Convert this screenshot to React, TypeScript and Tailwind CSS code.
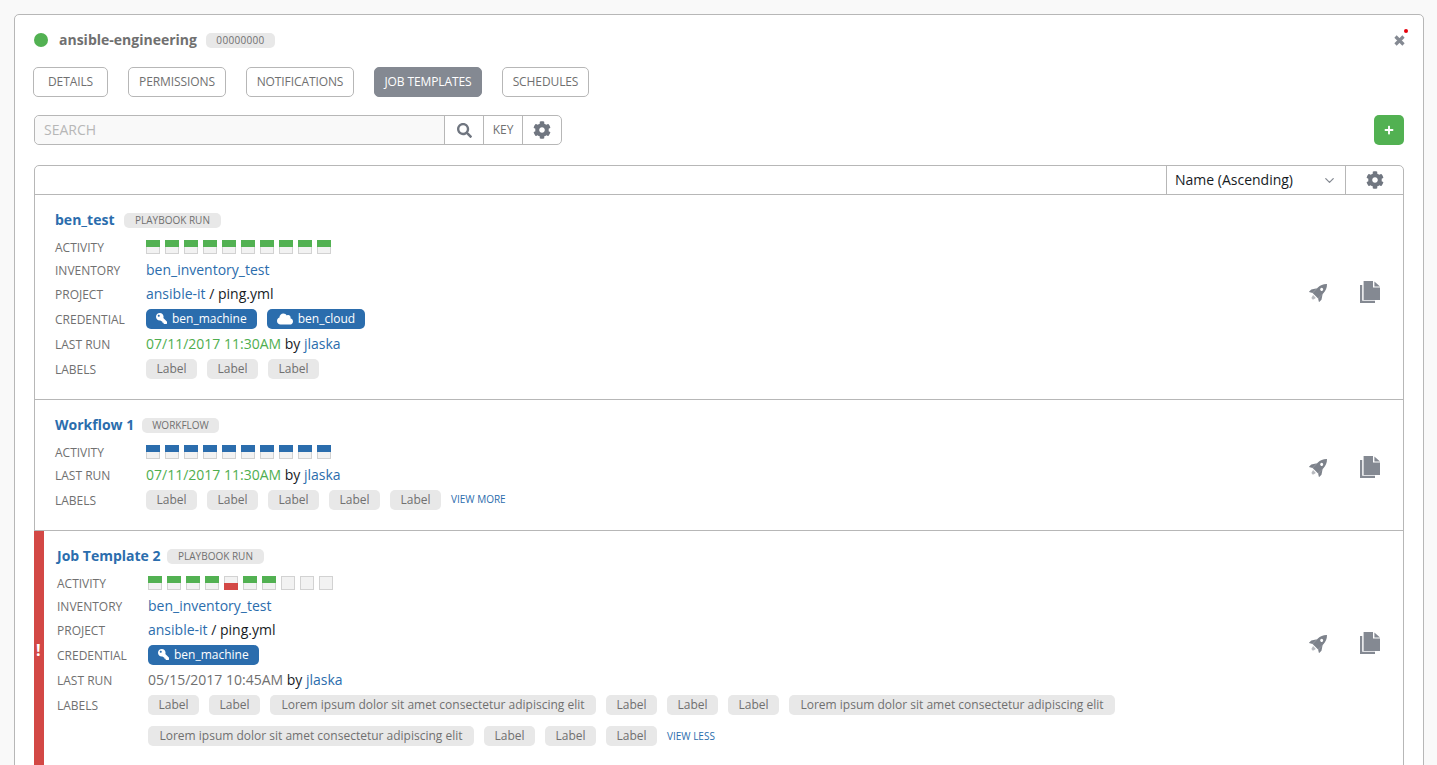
import { FaCloud, FaCog, FaKey, FaPlus, FaSearch } from 'react-icons/fa';
import { ChevronDown } from 'lucide-react';

const lorem = 'Lorem ipsum dolor sit amet consectetur adipiscing elit';
const link = 'text-[#2b6dad]';

const Chip = ({ children }: { children: React.ReactNode }) => (
    <span className="flex h-5 w-[51px] items-center justify-center rounded-[5px] bg-[#e8e8e8] text-xs whitespace-nowrap text-[#707070]">
        {children}
    </span>
);

const LongChip = () => (
    <span className="flex h-5 w-[326px] items-center justify-center rounded-[5px] bg-[#e8e8e8] text-xs whitespace-nowrap text-[#707070]">
        {lorem}
    </span>
);

const Credential = ({ name, cloud }: { name: string; cloud?: boolean }) => (
    <span className="flex h-5 items-center gap-[5px] rounded-[5px] bg-[#2b6dad] px-[10px] text-xs text-white">
        {cloud ? <FaCloud className="h-[14px] w-[16px]" /> : <FaKey className="h-[11px] w-[11px] -scale-x-100" />}
        {name}
    </span>
);

const Sprite = ({ status }: { status: string }) => (
    <span className="flex h-[14px] w-[14px] flex-col">
        {status === 'ok' && <span className="h-[7px] bg-[#52b152]" />}
        {status === 'workflow' && <span className="h-[7px] bg-[#2b6dad]" />}
        {status === 'empty' ? (
            <span className="h-[14px] border border-[#d2d2d2] bg-[#f2f2f2]" />
        ) : status === 'failed' ? (
            <>
                <span className="h-[7px] border border-b-0 border-[#d2d2d2] bg-[#f2f2f2]" />
                <span className="h-[7px] bg-[#d34845]" />
            </>
        ) : (
            <span className="h-[7px] border border-t-0 border-[#d2d2d2] bg-[#f2f2f2]" />
        )}
    </span>
);

// values sit 1px above their label
const Field = ({ label, h, children }: { label: string; h: string; children: React.ReactNode }) => (
    <div className={`flex items-center ${h}`}>
        <span className="w-[91px] shrink-0 text-xs text-[#707070]">{label}</span>
        <div className="mb-[2px] flex">{children}</div>
    </div>
);

const Activity = ({ items }: { items: string[] }) => (
    <div className="flex gap-[5px]">
        {items.map((s, i) => (
            <Sprite key={i} status={s} />
        ))}
    </div>
);

const RocketIcon = () => (
    <svg viewBox="0 0 19 19" className="h-[19px] w-[19px] fill-[#7d828b]">
        <g transform="rotate(45 9.5 9.5)">
            <path d="M9.5-2.5C12.2 0 13.4 3.2 13.4 6.5V14H5.6V6.5C5.6 3.2 6.800 0 9.500-2.500z" />
            <path d="M5.600 7.500 2.300 12.500V16L5.600 14zM13.400 7.500 16.700 12.500V16L13.400 14z" />
            <path d="M7.500 15.200H11.500L10.600 18.500H8.400z" fillOpacity="0.55" />
            <circle cx="9.500" cy="5" r="1.500" className="fill-white" />
        </g>
    </svg>
);

const CopyIcon = () => (
    <svg viewBox="0 0 20 22" className="h-[22px] w-[20px] fill-[#848992]">
        <path d="M0 4h2.200v15.800H15V22H0z" />
        <path d="M3.600 0h9.400v6.600h7V19H3.600zM14.400 0.400 20 5.400h-5.600z" />
    </svg>
);

const RowActions = () => (
    <div className="flex items-center gap-[32px] pr-[3px]">
        <RocketIcon />
        <CopyIcon />
    </div>
);

const Title = ({ name, type, nameW, typeW }: { name: string; type: string; nameW: string; typeW: string }) => (
    <div className="flex h-5 items-center">
        <span className={`text-sm font-bold whitespace-nowrap ${link} ${nameW}`}>{name}</span>
        <span className={`flex h-[15px] items-center justify-center rounded-[5px] bg-[#e8e8e8] text-[10px] text-[#707070] ${typeW}`}>
            {type}
        </span>
    </div>
);

const RunBy = ({ time, ok }: { time: string; ok?: boolean }) => (
    <span className="text-sm text-[#161b1f]">
        <span className={ok ? 'text-[#4fae4f]' : 'text-[#707070]'}>{time}</span> by <span className={link}>jlaska</span>
    </span>
);

const Tab = ({ label, w, active }: { label: string; w: string; active?: boolean }) => (
    <button
        className={`flex h-[30px] items-center justify-center rounded-[5px] border text-xs tracking-[-0.1px] ${w} ${
            active ? 'border-[#848992] bg-[#848992] text-white' : 'border-[#b7b7b7] bg-white text-[#707070]'
        }`}
    >
        {label}
    </button>
);

const okTen = Array(10).fill('ok');

export default function App() {
    return (
        <div className="h-[765px] overflow-hidden bg-[#f9f9f9] pt-[14px] pr-[13px] pl-[14px] font-['Open_Sans',sans-serif]">
            <div className="h-[800px] rounded-[5px] border border-[#b7b7b7] bg-white px-[19px] pt-[15px]">
                {/* Header */}
                <div className="relative flex h-5 items-center">
                    <span className="h-[14px] w-[14px] rounded-full bg-[#52b152]" />
                    <span className="ml-[11px] text-sm font-bold text-[#707070]">ansible-engineering</span>
                    <span className="ml-[9px] flex h-[15px] w-[69px] items-center justify-center rounded-[5px] bg-[#e8e8e8] text-[10px] tracking-[0.3px] text-[#707070]">
                        00000000
                    </span>
                    <svg viewBox="0 0 11 11" className="mr-[-1px] ml-auto h-[11px] w-[11px] stroke-[#848992]">
                        <path d="M1.500 1.500l8 8M9.500 1.500l-8 8" strokeWidth="3.200" />
                    </svg>
                    <span className="absolute top-[-1px] right-[-4px] h-[4px] w-[4px] rounded-full bg-red-600" />
                </div>

                {/* Tabs */}
                <div className="mt-[17px] ml-[-1px] flex gap-5">
                    <Tab label="DETAILS" w="w-[75px]" />
                    <Tab label="PERMISSIONS" w="w-[98px]" />
                    <Tab label="NOTIFICATIONS" w="w-[108px]" />
                    <Tab label="JOB TEMPLATES" w="w-[108px]" active />
                    <Tab label="SCHEDULES" w="w-[87px]" />
                </div>

                {/* Search */}
                <div className="mt-[18px] flex items-center justify-between">
                    <div className="flex h-[30px] w-[528px] rounded-[5px] border border-[#b7b7b7]">
                        <span className="flex flex-1 items-center rounded-l-[5px] bg-[#f9f9f9] pl-[9px] text-sm text-[#b7b7b7]">
                            SEARCH
                        </span>
                        <span className="flex w-[39px] items-center justify-center border-l border-[#b7b7b7] text-[#707680]">
                            <FaSearch className="h-[15px] w-[15px]" />
                        </span>
                        <span className="flex w-[39px] items-center justify-center border-l border-[#b7b7b7] text-xs text-[#707070]">
                            KEY
                        </span>
                        <span className="flex w-[39px] items-center justify-center border-l border-[#b7b7b7] text-[#707680]">
                            <FaCog className="h-[18px] w-[18px]" />
                        </span>
                    </div>
                    <button className="flex h-[30px] w-[30px] items-center justify-center rounded-[5px] bg-[#52b152] text-white">
                        <FaPlus className="h-[10px] w-[10px]" />
                    </button>
                </div>

                {/* List */}
                <div className="mt-5 rounded-t-[5px] border border-[#b7b7b7]">
                    <div className="flex h-[29px] justify-end border-b border-[#b7b7b7]">
                        <div className="flex w-[179px] items-center justify-between border-l border-[#b7b7b7] pr-[8px] pl-[8px] text-sm text-[#161b1f]">
                            Name (Ascending)
                            <ChevronDown className="h-[15px] w-[15px] text-[#848992]" />
                        </div>
                        <div className="flex w-[58px] items-center justify-center border-l border-[#b7b7b7] text-[#707680]">
                            <FaCog className="h-[18px] w-[18px]" />
                        </div>
                    </div>

                    {/* ben_test */}
                    <div className="flex h-[205px] items-center justify-between border-b border-[#b7b7b7] pr-5 pl-5">
                        <div className="h-full pt-[15px]">
                            <Title name="ben_test" type="PLAYBOOK RUN" nameW="w-[69px]" typeW="w-[97px]" />
                            <Field label="ACTIVITY" h="mt-[7px] h-[22px]">
                                <Activity items={okTen} />
                            </Field>
                            <Field label="INVENTORY" h="h-6">
                                <span className={`text-sm ${link}`}>ben_inventory_test</span>
                            </Field>
                            <Field label="PROJECT" h="h-6">
                                <span className="text-sm text-[#161b1f]">
                                    <span className={link}>ansible-it</span> / ping.yml
                                </span>
                            </Field>
                            <Field label="CREDENTIAL" h="h-[25px]">
                                <div className="flex gap-[10px]">
                                    <Credential name="ben_machine" />
                                    <Credential name="ben_cloud" cloud />
                                </div>
                            </Field>
                            <Field label="LAST RUN" h="h-[25px]">
                                <RunBy time="07/11/2017 11:30AM" ok />
                            </Field>
                            <Field label="LABELS" h="h-[25px]">
                                <div className="flex gap-[10px]">
                                    <Chip>Label</Chip>
                                    <Chip>Label</Chip>
                                    <Chip>Label</Chip>
                                </div>
                            </Field>
                        </div>
                        <div className="-mt-[10px]">
                            <RowActions />
                        </div>
                    </div>

                    {/* Workflow 1 */}
                    <div className="flex h-[131px] items-center justify-between border-b border-[#b7b7b7] pr-5 pl-5">
                        <div className="h-full pt-[15px]">
                            <Title name="Workflow 1" type="WORKFLOW" nameW="w-[87px]" typeW="w-[77px]" />
                            <Field label="ACTIVITY" h="mt-[7px] h-[22px]">
                                <Activity items={Array(10).fill('workflow')} />
                            </Field>
                            <Field label="LAST RUN" h="h-6">
                                <RunBy time="07/11/2017 11:30AM" ok />
                            </Field>
                            <Field label="LABELS" h="h-[25px]">
                                <div className="flex items-center gap-[10px]">
                                    <Chip>Label</Chip>
                                    <Chip>Label</Chip>
                                    <Chip>Label</Chip>
                                    <Chip>Label</Chip>
                                    <Chip>Label</Chip>
                                    <span className={`text-[10px] ${link}`}>VIEW MORE</span>
                                </div>
                            </Field>
                        </div>
                        <div className="mt-[4px]">
                            <RowActions />
                        </div>
                    </div>

                    {/* Job Template 2 */}
                    <div className="ml-[-1px] flex h-[300px] items-start justify-between border-l-[10px] border-[#d34845] pr-5 pl-[13px]">
                        <div className="relative pt-[15px]">
                            <span className="absolute top-[107px] left-[-21px] text-base font-bold text-white">!</span>
                            <Title name="Job Template 2" type="PLAYBOOK RUN" nameW="w-[110px]" typeW="w-[97px]" />
                            <Field label="ACTIVITY" h="mt-[7px] h-[22px]">
                                <Activity items={['ok', 'ok', 'ok', 'ok', 'failed', 'ok', 'ok', 'empty', 'empty', 'empty']} />
                            </Field>
                            <Field label="INVENTORY" h="h-6">
                                <span className={`text-sm ${link}`}>ben_inventory_test</span>
                            </Field>
                            <Field label="PROJECT" h="h-6">
                                <span className="text-sm text-[#161b1f]">
                                    <span className={link}>ansible-it</span> / ping.yml
                                </span>
                            </Field>
                            <Field label="CREDENTIAL" h="h-[25px]">
                                <Credential name="ben_machine" />
                            </Field>
                            <Field label="LAST RUN" h="h-[25px]">
                                <RunBy time="05/15/2017 10:45AM" />
                            </Field>
                            <div className="flex">
                                <span className="mt-[5px] w-[91px] shrink-0 text-xs text-[#707070]">LABELS</span>
                                <div className="mt-[2px] flex flex-col gap-[11px]">
                                    <div className="flex gap-[10px]">
                                        <Chip>Label</Chip>
                                        <Chip>Label</Chip>
                                        <LongChip />
                                        <Chip>Label</Chip>
                                        <Chip>Label</Chip>
                                        <Chip>Label</Chip>
                                        <LongChip />
                                    </div>
                                    <div className="flex items-center gap-[10px]">
                                        <LongChip />
                                        <Chip>Label</Chip>
                                        <Chip>Label</Chip>
                                        <Chip>Label</Chip>
                                        <span className={`text-[10px] ${link}`}>VIEW LESS</span>
                                    </div>
                                </div>
                            </div>
                        </div>
                        <div className="mt-[101px]">
                            <RowActions />
                        </div>
                    </div>
                </div>
            </div>
        </div>
    );
}
